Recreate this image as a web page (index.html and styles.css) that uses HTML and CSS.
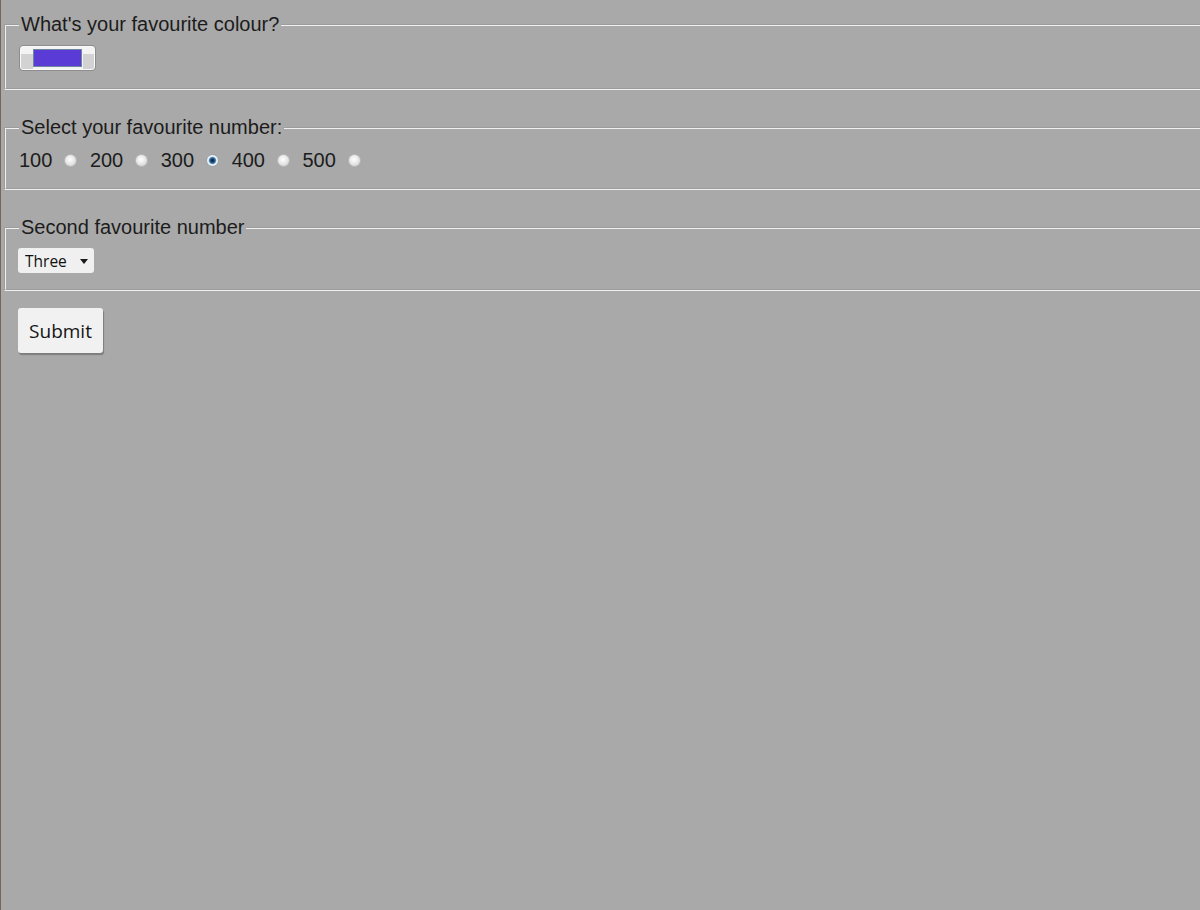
FILE: index.html
```html
<!DOCTYPE html>
<html lang="en">
<head>
<meta charset="utf-8">
<title>Favourites</title>
<link rel="stylesheet" href="styles.css">
</head>
<body>
<form class="form">
  <fieldset class="group">
    <legend class="group-title">What's your favourite colour?</legend>
    <div class="row">
      <input class="colour" type="color" value="#5b3bd6">
    </div>
  </fieldset>
  <fieldset class="group group-radios">
    <legend class="group-title">Select your favourite number:</legend>
    <div class="row radios">
      <span class="num">100</span><input class="radio" type="radio" name="num" value="100">
      <span class="num">200</span><input class="radio" type="radio" name="num" value="200">
      <span class="num">300</span><input class="radio" type="radio" name="num" value="300" checked>
      <span class="num">400</span><input class="radio" type="radio" name="num" value="400">
      <span class="num">500</span><input class="radio" type="radio" name="num" value="500">
    </div>
  </fieldset>
  <fieldset class="group group-select">
    <legend class="group-title">Second favourite number</legend>
    <div class="row">
      <span class="select-wrap">
        <select class="select">
          <option>One</option>
          <option>Two</option>
          <option selected>Three</option>
          <option>Four</option>
        </select>
      </span>
    </div>
  </fieldset>
  <button class="submit" type="submit">Submit</button>
</form>
</body>
</html>
```
FILE: styles.css
```css
html, body {
  margin: 0;
  padding: 0;
}
body {
  background: #a9a9a9;
  border-left: 1px solid #74675a;
  min-height: 100vh;
  box-sizing: border-box;
  font-family: "Liberation Sans", Arial, sans-serif;
  color: #1c1c1c;
  overflow: hidden;
}
.form {
  padding-top: 13px;
}
.group {
  margin: 0 -20px 26px 3px;
  padding: 9px 13px 17px 13px;
  border: 2px groove #f0f0f0;
  min-width: 0;
}
.group-radios {
  padding-top: 10px;
  padding-bottom: 17px;
}
.group-select {
  padding-bottom: 16px;
  margin-bottom: 17px;
}
.group-title {
  font-size: 20px;
  line-height: 23px;
  padding: 0 2px;
  color: #1c1c1c;
}
.row {
  display: flex;
  align-items: center;
}
.colour {
  -webkit-appearance: none;
  appearance: none;
  width: 77px;
  height: 26px;
  box-sizing: border-box;
  margin: 0;
  padding: 3px 13px;
  border: 1px solid #8c8c8c;
  border-radius: 4px;
  background:
    linear-gradient(to bottom, #f3f3f3 0, #f3f3f3 8px, transparent 8px),
    linear-gradient(to right, #d2d2d2 0, #d2d2d2 13px, #f3f3f3 13px, #f3f3f3 63px, #d2d2d2 63px);
  box-shadow: inset 0 0 0 1px #fafafa;
  cursor: pointer;
}
.colour::-webkit-color-swatch-wrapper {
  padding: 0;
}
.colour::-webkit-color-swatch {
  border: 1px solid #6f86a0;
  border-radius: 0;
}
.radios {
  height: 22px;
  font-size: 20px;
  line-height: 22px;
}
.num {
  color: #1c1c1c;
}
.radio {
  -webkit-appearance: none;
  appearance: none;
  width: 13px;
  height: 13px;
  margin: 1px 12.5px 0 12px;
  border-radius: 50%;
  border: 1px solid #b9b9b9;
  box-sizing: border-box;
  background: radial-gradient(circle at 45% 40%, #ffffff 0, #e9e9e9 45%, #c9c9c9 100%);
}
.radio:checked {
  border-color: #9aa4ad;
  background: radial-gradient(circle at 50% 50%, #0d2440 0, #163a62 1.6px, #4f8fc2 3.2px, #eef2f5 4.2px, #e4e4e4 100%);
}
.select-wrap {
  position: relative;
  display: inline-block;
  margin-left: -1px;
}
.select {
  -webkit-appearance: none;
  appearance: none;
  width: 76px;
  height: 25px;
  margin: 0;
  padding: 0 0 0 7px;
  border: none;
  border-radius: 3px;
  background: #f0f0f0;
  font-family: "Open Sans", sans-serif;
  font-size: 15.5px;
  color: #111;
}
.select-wrap::after {
  content: "";
  position: absolute;
  right: 6px;
  top: 11px;
  border-left: 4px solid transparent;
  border-right: 4px solid transparent;
  border-top: 5px solid #1a1a1a;
  pointer-events: none;
}
.submit {
  display: block;
  margin: 0 0 0 17px;
  width: 85px;
  height: 45px;
  padding: 0;
  border: none;
  border-radius: 3px;
  background: #f1f1f1;
  box-shadow: 1px 2px 1px #7d7d7d;
  font-family: "Open Sans", sans-serif;
  font-size: 19px;
  color: #151515;
}
```
